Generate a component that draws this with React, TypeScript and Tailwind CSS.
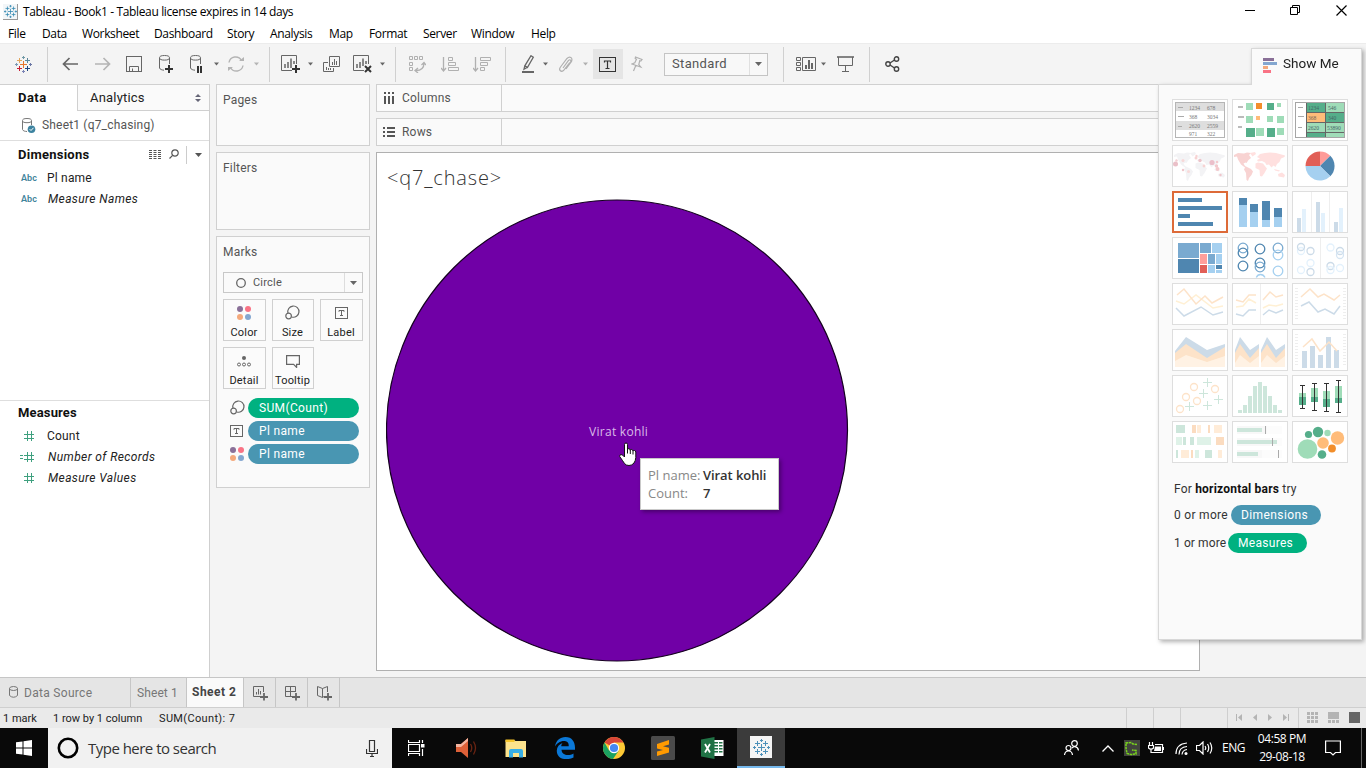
import React from "react";

type IconProps = { w: number; h: number; c?: string; sw?: number; children: React.ReactNode };

function Svg({ w, h, c = "", sw = 1, children }: IconProps) {
  return (
    <svg width={w} height={h} viewBox={`0 0 ${w} ${h}`} fill="none" stroke="currentColor" strokeWidth={sw} className={`shrink-0 ${c}`}>
      {children}
    </svg>
  );
}

function Plus({ x, y, r, color, sw = 1 }: { x: number; y: number; r: number; color: string; sw?: number }) {
  return <path d={`M${x - r} ${y}H${x + r}M${x} ${y - r}V${y + r}`} stroke={color} strokeWidth={sw} />;
}

function TableauLogo({ c = "", mono = "" }: { c?: string; mono?: string }) {
  const k = (v: string) => mono || v;
  return (
    <Svg w={17} h={17} c={c}>
      <Plus x={8.5} y={8.5} r={3.5} color={k("#e8762d")} />
      <Plus x={4.5} y={4.5} r={2.5} color={k("#e3a55a")} />
      <Plus x={12.5} y={4.5} r={2.5} color={k("#5b879b")} />
      <Plus x={4.5} y={12.5} r={2.5} color={k("#c72035")} />
      <Plus x={12.5} y={12.5} r={2.5} color={k("#1f457e")} />
      <Plus x={8.5} y={1.5} r={1.5} color={k("#7099a6")} />
      <Plus x={8.5} y={15.5} r={1.5} color={k("#7b83b5")} />
      <Plus x={1.5} y={8.5} r={1.5} color={k("#7b98b5")} />
      <Plus x={15.5} y={8.5} r={1.5} color={k("#6b77a5")} />
    </Svg>
  );
}

function Caret({ c = "" }: { c?: string }) {
  return (
    <Svg w={5} h={4} c={c}>
      <path d="M0 0.5H5L2.5 3.5Z" fill="currentColor" stroke="none" />
    </Svg>
  );
}

function BigCaret({ c = "" }: { c?: string }) {
  return (
    <Svg w={7} h={4} c={c}>
      <path d="M0 0H7L3.5 4Z" fill="currentColor" stroke="none" />
    </Svg>
  );
}

function Divider({ c = "" }: { c?: string }) {
  return <div className={`h-[35px] w-px shrink-0 bg-[#d0d0d0] ${c}`} />;
}

function FourDots({ c = "" }: { c?: string }) {
  return (
    <Svg w={14} h={14} c={c}>
      <g stroke="none">
        <circle cx="3" cy="3" r="3" fill="#8a7098" />
        <circle cx="11" cy="3" r="3" fill="#f97385" />
        <circle cx="3" cy="11" r="3" fill="#f4a97c" />
        <circle cx="11" cy="11" r="3" fill="#84a7d0" />
      </g>
    </Svg>
  );
}

function SizeIcon({ c = "" }: { c?: string }) {
  return (
    <Svg w={15} h={15} c={c} sw={1.2}>
      <path d="M3 8.2A5.6 5.6 0 1 1 6.8 12" />
      <circle cx="3.6" cy="11" r="2.8" />
    </Svg>
  );
}

function LabelIcon({ c = "" }: { c?: string }) {
  return (
    <Svg w={13} h={12} c={c}>
      <rect x="0.5" y="0.5" width="12" height="11" />
      <path d="M4 4.8V3.5H9V4.8M6.5 3.5V8.5M5 8.5H8" />
    </Svg>
  );
}

function Toolbar() {
  return (
    <div className="flex h-[41px] items-center border-t border-[#ececec] bg-[#f4f4f4] text-[#666]">
      <TableauLogo c="ml-[15px]" />
      <Divider c="ml-[15px]" />
      <Svg w={17} h={14} c="ml-[14px]" sw={1.7}>
        <path d="M16 7H1.5M7.5 1L1.5 7L7.5 13" />
      </Svg>
      <Svg w={17} h={14} c="ml-[15px] text-[#b4b4b4]" sw={1.7}>
        <path d="M1 7H15.500M9.500 1L15.500 7L9.500 13" />
      </Svg>
      <Svg w={16} h={16} c="ml-[15px]">
        <rect x="0.500" y="0.500" width="15" height="15" />
        <path d="M3.500 15V10.500H12.500V15M6.500 15.500V12.500" />
      </Svg>
      <Svg w={15} h={18} c="ml-[17px]">
        <ellipse cx="5.500" cy="2.800" rx="5" ry="2.300" />
        <path d="M0.500 3V13C1 14.500 3 15 5 15.200M10.500 3V9" />
        <path d="M10 10V18M6 14H14" stroke="#333" strokeWidth="2" />
      </Svg>
      <Svg w={14} h={18} c="ml-[16px]">
        <ellipse cx="5.500" cy="2.800" rx="5" ry="2.300" />
        <path d="M0.500 3V13C1 14.500 3 15 5 15.200M10.500 3V9" />
        <path d="M8 11V18M11 11V18" stroke="#333" strokeWidth="2" />
      </Svg>
      <Caret c="ml-[10px]" />
      <Svg w={18} h={16} c="ml-[8px] text-[#b4b4b4]" sw={1.400}>
        <path d="M2 6.500A6.700 6.700 0 0 1 14.500 4.500M16 9.500A6.700 6.700 0 0 1 3.500 11.500" />
        <path d="M12 5H17V1ZM6 11H1V15Z" fill="currentColor" stroke="none" />
      </Svg>
      <Caret c="ml-[9px] text-[#b4b4b4]" />
      <Divider c="ml-[10px]" />
      <Svg w={19} h={18} c="ml-[11px]">
        <path d="M11 15.500H0.500V0.500H15.500V9" />
        <path d="M4 13V9M7 13V7M10 13V3.500M13 9V6" strokeWidth="1.500" />
        <path d="M15 10V18M11 14H19" stroke="#333" strokeWidth="2" />
      </Svg>
      <Caret c="ml-[8px]" />
      <Svg w={17} h={17} c="ml-[10px]">
        <path d="M6.500 0.500H16.500V10.500H6.500ZM5 6.500H0.500V15.500H10.500V12M9.500 9V6M11.500 9V3M13.500 9V5M3.500 14V11M5.500 14V12M7.500 14V12" />
      </Svg>
      <Svg w={19} h={18} c="ml-[13px]">
        <path d="M11 15.500H0.500V0.500H15.500V9" />
        <path d="M4 13V9M7 13V7M10 11V3.500M13 9V6" strokeWidth="1.500" />
        <path d="M12 11L18 17M18 11L12 17" stroke="#333" strokeWidth="2" />
      </Svg>
      <Caret c="ml-[8px]" />
      <Divider c="ml-[10px]" />
      <Svg w={17} h={17} c="ml-[13px] text-[#b0b0b0]">
        <path d="M0.500 0.500H3.500V3.500H0.500ZM5.500 0.500H8.500V3.500H5.500ZM10.500 0.500H13.500V3.500H10.500ZM0.500 6.500H3.500V9.500H0.500ZM0.500 11.500H3.500V14.500H0.500Z" />
        <path d="M15 7Q15 14.500 7 14.500M12.500 9L15 6.500L17 9M9 12L6 14.500L9 17" strokeWidth="1.300" />
      </Svg>
      <Svg w={18} h={15} c="ml-[15px] text-[#b0b0b0]">
        <path d="M2.500 0V14M0 11L2.500 14L5 11" strokeWidth="1.300" />
        <path d="M7.500 0.500H11.500V3.500H7.500ZM7.500 5.500H14.500V8.500H7.500ZM7.500 10.500H17.500V13.500H7.500Z" />
      </Svg>
      <Svg w={18} h={15} c="ml-[14px] text-[#b0b0b0]">
        <path d="M2.500 0V14M0 11L2.500 14L5 11" strokeWidth="1.300" />
        <path d="M7.500 0.500H17.500V3.500H7.500ZM7.500 5.500H14.500V8.500H7.500ZM7.500 10.500H11.500V13.500H7.500Z" />
      </Svg>
      <Divider c="ml-[14px]" />
      <Svg w={13} h={18} c="ml-[16px]">
        <path d="M9 0.700L11.300 2.300L5.500 12.300L2.800 10.800ZM2.800 10.800L2 14.300L5.500 12.300" strokeWidth="1.300" />
        <path d="M0 17H12" strokeWidth="2" />
      </Svg>
      <Caret c="ml-[8px]" />
      <Svg w={14} h={17} c="ml-[11px] text-[#b0b0b0]" sw={1.200}>
        <path d="M4 12L9.500 4.500Q11 3 11.700 4.500T10.500 7L4.500 14.500Q2.500 16 1.200 14.500T1.500 11L8 2.500Q10 0.500 11.800 1.500T12.500 5.500L7 13" />
      </Svg>
      <Caret c="ml-[10px] text-[#b0b0b0]" />
      <div className="ml-[5px] flex h-[30px] w-[30px] items-center justify-start bg-[#e5e5e5] pl-[6px] text-[#333]">
        <Svg w={17} h={15}>
          <rect x="0.500" y="0.500" width="16" height="14" />
          <path d="M5.500 5.500V4H11.500V5.500M8.500 4V11.500M6.500 11.500H10.500" strokeWidth="1.200" />
        </Svg>
      </div>
      <Svg w={12} h={16} c="ml-[8px] mr-px text-[#b0b0b0]" sw={1.200}>
        <path d="M4.500 1L11 3.500L9.800 5L8.700 4.700L7.800 8.500L9.800 11L0.800 8L3.800 6.800L5.500 3.300L4.200 2.500ZM4.800 9.500L2.500 15" />
      </Svg>
      <div className="ml-[20px] flex h-[23px] w-[104px] items-center border border-[#c4c4c4] bg-[#f8f8f8]">
        <span className="w-[84px] pl-[7px] text-[13px] tracking-[0.350px] text-[#555]">Standard</span>
        <div className="flex h-full flex-1 items-center justify-center border-l border-[#e0e0e0]">
          <BigCaret />
        </div>
      </div>
      <Divider c="ml-[15px]" />
      <Svg w={20} h={15} c="ml-[12px]">
        <path d="M0.500 0.500H4.500V3.500H0.500ZM0.500 5.500H4.500V8.500H0.500ZM0.500 10.500H4.500V13.500H0.500ZM6.500 0.500H19.500V13.500H6.500Z" />
        <path d="M10 12V8M13 12V3M16 12V6" strokeWidth="2" />
      </Svg>
      <Caret c="ml-[5px]" />
      <Svg w={17} h={16} c="ml-[11px]">
        <path d="M0 1H17" strokeWidth="1.600" />
        <path d="M1.500 1V9.500H15.500V1M8.500 9.500V15M5 15.500H12" />
      </Svg>
      <Divider c="ml-[15px]" />
      <Svg w={15} h={16} c="ml-[15px] text-[#444]" sw={1.400}>
        <circle cx="3" cy="8" r="2.200" />
        <circle cx="11.500" cy="3" r="2.200" />
        <circle cx="11.500" cy="13" r="2.200" />
        <path d="M5 7L9.500 4M5 9L9.500 12" />
      </Svg>
    </div>
  );
}

function Field({ kind, name, italic }: { kind: "abc" | "num" | "calc"; name: string; italic?: boolean }) {
  return (
    <div className="flex h-[21px] items-center">
      {kind === "abc" ? (
        <span className="w-[26px] pt-[2px] text-[9px] font-semibold tracking-[0.100px] text-[#3f849b]">Abc</span>
      ) : (
        <Svg w={15} h={10} c="-ml-[1px] mr-[12px] text-[#3fa07f]">
          <path d="M4 3.500H14M4 7.500H14M7.500 0V10M11.500 0V10" />
          {kind === "calc" && <path d="M0 3.500H3M0 6.500H3" />}
        </Svg>
      )}
      <span className={`text-[12px] text-[#222] ${italic ? "pl-px tracking-[0.400px] italic" : "tracking-[0.200px]"}`}>{name}</span>
    </div>
  );
}

function DataPane() {
  return (
    <div className="flex w-[210px] shrink-0 flex-col border-r border-[#cfcfcf] bg-white">
      <div className="flex h-[27px] border-t border-[#d0d0d0] text-[13px]">
        <div className="w-[77px] pl-[18px] leading-[26px] font-bold tracking-[0.450px] text-[#111]">Data</div>
        <div className="flex flex-1 items-center justify-between border-b border-l border-[#d0d0d0] bg-[#fafafa] pr-[8px] pl-[12px] text-[#222]">
          <span className="tracking-[0.200px]">Analytics</span>
          <Svg w={6} h={8} c="text-[#667]">
            <path d="M0 3H6L3 0ZM0 5H6L3 8Z" fill="currentColor" stroke="none" />
          </Svg>
        </div>
      </div>
      <div className="flex h-[30px] items-center border-b border-[#dedede] pb-px pl-[22px] text-[12px] text-[#555]">
        <Svg w={14} h={15} c="mt-px text-[#777]">
          <ellipse cx="5" cy="2.600" rx="4.500" ry="2.100" />
          <path d="M0.500 3V11.500C1 13 3 13.400 5 13.500M9.500 3V7" />
          <circle cx="9.500" cy="11.200" r="3.800" fill="#3d83a0" stroke="none" />
          <path d="M7.700 11.200L9 12.500L11.500 9.800" stroke="#fff" />
        </Svg>
        <span className="ml-[6px] tracking-[0.180px]">Sheet1 (q7_chasing)</span>
      </div>
      <div className="flex h-[260px] flex-col border-b border-[#dedede]">
        <div className="flex h-[26px] items-center pt-px pl-[18px] text-[#555]">
          <span className="w-[131px] text-[13px] font-bold tracking-[0.250px] text-[#111]">Dimensions</span>
          <Svg w={12} h={9} c="-mt-px">
            <path d="M0 .5H12M0 2.500H12M0 4.500H12M0 6.500H12M0 8.500H12" strokeDasharray="3 1.500 3 1.500 3" />
          </Svg>
          <Svg w={10} h={10} c="-mt-px ml-[8px]" sw={1.200}>
            <circle cx="6" cy="4" r="3.200" />
            <path d="M3.600 6.400L0.500 9.500" />
          </Svg>
          <div className="ml-[7px] h-[18px] w-px bg-[#ccc]" />
          <BigCaret c="ml-[8px]" />
        </div>
        <div className="pl-[21px]">
          <Field kind="abc" name="Pl name" />
          <Field kind="abc" name="Measure Names" italic />
        </div>
      </div>
      <div className="flex h-[24px] items-center pl-[18px] text-[13px] font-bold tracking-[0.150px] text-[#111]">Measures</div>
      <div className="pl-[21px]">
        <Field kind="num" name="Count" />
        <Field kind="calc" name="Number of Records" italic />
        <Field kind="num" name="Measure Values" italic />
      </div>
    </div>
  );
}

function MarkButton({ label, children }: { label: string; children: React.ReactNode }) {
  return (
    <div className="flex h-[42px] flex-col items-center border border-[#d0d0d0] bg-[#fbfbfb] pr-px text-[#666]">
      <div className="flex h-[25px] items-center">{children}</div>
      <span className="pt-px text-[11px] leading-[14px] tracking-[0.200px] whitespace-nowrap text-[#222]">{label}</span>
    </div>
  );
}

function Pill({ label, color, children }: { label: string; color: string; children: React.ReactNode }) {
  return (
    <div className="flex h-[23px] items-center text-[#666]">
      <div className="flex w-[18px] justify-start">{children}</div>
      <div className={`h-[20px] w-[111px] rounded-full pl-[11px] text-[12px] leading-[20px] tracking-[0.350px] text-white ${color}`}>{label}</div>
    </div>
  );
}

function Cards() {
  const card = "border border-[#d0d0d0] bg-[#fafafa] px-[6px] text-[12px] tracking-[0.200px] text-[#555]";
  return (
    <div className="ml-[6px] flex w-[154px] shrink-0 flex-col gap-[6px]">
      <div className={`h-[62px] pt-[6px] ${card}`}>Pages</div>
      <div className={`h-[78px] pt-[6px] ${card}`}>Filters</div>
      <div className={`h-[252px] pt-[6px] ${card}`}>
        <div>Marks</div>
        <div className="mt-[11px] flex h-[21px] w-[140px] items-center border border-[#c8c8c8] bg-[#fafafa] text-[#666]">
          <Svg w={10} h={10} c="ml-[12px]" sw={1.300}>
            <circle cx="5" cy="5" r="4.300" />
          </Svg>
          <span className="ml-[7px] flex-1 pt-px text-[11px] text-[#555]">Circle</span>
          <div className="flex h-full w-[18px] items-center justify-center border-l border-[#ddd]">
            <BigCaret />
          </div>
        </div>
        <div className="mt-[6px] grid w-[140px] grid-cols-[43px_42px_43px] gap-x-[6px] gap-y-[6px]">
          <MarkButton label="Color"><FourDots /></MarkButton>
          <MarkButton label="Size"><SizeIcon /></MarkButton>
          <MarkButton label="Label"><LabelIcon /></MarkButton>
          <MarkButton label="Detail">
            <Svg w={14} h={11} c="mt-[2px]">
              <circle cx="7" cy="2" r="2" fill="currentColor" stroke="none" />
              <circle cx="2" cy="8.500" r="1.500" />
              <circle cx="7" cy="8.500" r="1.500" />
              <circle cx="12" cy="8.500" r="1.500" />
            </Svg>
          </MarkButton>
          <MarkButton label="Tooltip">
            <Svg w={14} h={13} c="mt-px" sw={1.200}>
              <path d="M0.600 0.600H13.400V9.400H10.600V12.400L7.600 9.400H0.600Z" />
            </Svg>
          </MarkButton>
        </div>
        <div className="mt-[7px] pl-[7px]">
          <Pill label="SUM(Count)" color="bg-[#00b180]"><SizeIcon /></Pill>
          <Pill label="Pl name" color="bg-[#4996b2]"><LabelIcon /></Pill>
          <Pill label="Pl name" color="bg-[#4996b2]"><FourDots /></Pill>
        </div>
      </div>
    </div>
  );
}

function Shelf({ label, children }: { label: string; children: React.ReactNode }) {
  return (
    <div className="flex h-[28px] border border-[#d0d0d0] bg-[#fafafa] text-[12px] text-[#555]">
      <div className="flex w-[125px] items-center border-r border-[#d0d0d0] pl-[6px]">
        {children}
        <span className="ml-[7px] tracking-[0.200px]">{label}</span>
      </div>
    </div>
  );
}

function Worksheet() {
  return (
    <div className="ml-[6px] flex w-[824px] shrink-0 flex-col gap-[6px]">
      <Shelf label="Columns">
        <Svg w={12} h={12}>
          <path d="M2 0V2M6 0V2M10 0V2M2 4V12M6 4V12M10 4V12" strokeWidth="2" />
        </Svg>
      </Shelf>
      <Shelf label="Rows">
        <Svg w={12} h={10}>
          <path d="M0 1H2M0 5H2M0 9H2M4 1H12M4 5H12M4 9H12" strokeWidth="2" />
        </Svg>
      </Shelf>
      <div className="relative h-[519px] border border-[#b0b0b0] bg-white">
        <div className="pt-[10px] pl-[10px] font-['Open_Sans',sans-serif] text-[20px] leading-[30px] font-light tracking-[0.850px] text-[#333]">&lt;q7_chase&gt;</div>
        <svg className="absolute top-[46px] left-[9px]" width="463" height="463" viewBox="0 0 463 463">
          <circle cx="231" cy="231.500" r="230.500" fill="#7000a6" stroke="#14001e" strokeWidth="1.200" />
        </svg>
        <div className="absolute top-[270px] left-[212px] font-['Open_Sans',sans-serif] text-[12px] tracking-[0.280px] text-[#d9bbe8]">Virat kohli</div>
        <svg className="absolute top-[289px] left-[241px]" width="19" height="25" viewBox="0 0 19 25">
          <path
            d="M6.500 2.500Q6.500 1 8 1T9.500 2.500V7.500Q10 6.500 11 6.700T12.200 8.200Q12.600 7.300 13.700 7.500T15 9Q15.500 8.300 16.500 8.500T17.800 10V15.500Q17.500 19 16 21Q14 23.500 11 23.500Q8 23.500 6.500 21.500Q4.500 18.500 1.700 14.500Q1.500 12.800 3 12.500Q4.500 12.500 6.500 15Z"
            fill="#fff" stroke="#111" strokeWidth="1"
          />
          <path d="M9.500 7V11.500M12.300 8V12M15 9V12.500" stroke="#111" fill="none" />
        </svg>
        <div className="absolute top-[305px] left-[263px] grid h-[52px] w-[139px] grid-cols-[55px_1fr] content-center border border-[#c9c9c9] bg-white pl-[7px] font-['Open_Sans',sans-serif] text-[13px] leading-[18px] whitespace-nowrap shadow-[2px_2px_4px_rgba(0,0,0,0.350)]">
          <span className="text-[#888]">Pl name:</span>
          <span className="font-semibold tracking-[-0.080px] text-[#333]">Virat kohli</span>
          <span className="text-[#888]">Count:</span>
          <span className="font-semibold text-[#333]">7</span>
        </div>
      </div>
    </div>
  );
}

const D = "#4f86b0";
const L = "#a5d0f0";
const G = "#55ae8a";
const g = "#9fdcb8";
const O = "#f28e2b";
const o = "#ffbc79";

type R = [number, number, number, number, string];
function Rects({ items }: { items: R[] }) {
  return (
    <g shapeRendering="crispEdges" stroke="none">
      {items.map(([x, y, w, h, f], i) => (
        <rect key={i} x={x} y={y} width={w} height={h} fill={f} />
      ))}
    </g>
  );
}
type C = [number, number, number, string];
function Dots({ items, ring }: { items: C[]; ring?: boolean }) {
  return (
    <g>
      {items.map(([x, y, r, f], i) => (
        <circle key={i} cx={x} cy={y} r={r} fill={ring ? "none" : f} stroke={ring ? f : "none"} strokeWidth="1.300" />
      ))}
    </g>
  );
}
function Line({ d, c }: { d: string; c: string }) {
  return <path d={d} stroke={c} strokeWidth="1.500" fill="none" />;
}
function Num({ x, y, t, c = "#777" }: { x: number; y: number; t: string; c?: string }) {
  return <text x={x} y={y} fontSize="5.500" fill={c} fontFamily="Liberation Serif, serif">{t}</text>;
}

function World({ fill, americas }: { fill: string; americas: string }) {
  return (
    <g>
      <path
        fill={americas}
        d="M2 10L6 8L12 8.500L15 7.500L19 8L17 10L19 13L16.500 15L14.500 18L13.500 17.500L11.500 18.500L13 21L15 22L19 24L21 26.500L19.500 30L17 33L16 36L14.500 35L14 28L12 24.500L13 22.500L9 19.500L6 14.500L5 11.500L2 12Z"
      />
      <path
        fill={fill}
        d="M18 8L23 7L24 9L20.500 11.500ZM25 12L28 9L33 8L38 7.500L44 8L53 10.500L52.500 12L49 13.500L47.500 17L45 19L43.500 22L41.500 20.500L39.500 22.500L37 19.500L34.500 20L33 17.500L30 16L26 16.500L25 15L28 13.500ZM23.500 18.500L26 17.500L31 18.500L34 22.500L35 23.500L32.500 28L30 31.500L28 31L27.500 25L23.500 23ZM42 24L48 25.500L47 26.500L43 25.500ZM46 29L50 27.500L53 30L52 32.500L46.500 31.500Z"
      />
    </g>
  );
}

const thumbs: React.ReactNode[] = [
  <g key="text">
    <rect x="3.500" y="3.500" width="49" height="35" fill="#fff" stroke="#b5b5b5" />
    <Rects items={[[4, 4, 48, 8, "#dedede"], [4, 22, 48, 9, "#dedede"], [6, 8, 5, 1, "#aaa"], [6, 17, 6, 1, "#aaa"], [6, 27, 4, 1, "#aaa"]]} />
    <Num x={17} y={11} t="1234" /><Num x={35} y={11} t="678" />
    <Num x={17} y={20} t="368" /><Num x={35} y={20} t="3034" />
    <Num x={17} y={29} t="2620" /><Num x={35} y={29} t="2559" />
    <Num x={17} y={37} t="971" /><Num x={35} y={37} t="322" />
  </g>,
  <Rects key="heat" items={[[6, 7, 5, 2, "#bbb"], [6, 17, 6, 2, "#bbb"], [6, 27, 4, 2, "#bbb"], [14, 4, 7, 7, g], [24, 4, 6, 6, O], [35, 4, 7, 7, G], [45, 4, 4, 4, g], [14, 17, 7, 7, g], [24, 17, 4, 4, o], [35, 17, 6, 6, g], [45, 17, 7, 7, g], [14, 29, 9, 9, G], [24, 29, 8, 8, g], [35, 29, 8, 9, G], [45, 29, 7, 7, g]]} />,
  <g key="hl">
    <rect x="3.500" y="3.500" width="49" height="35" fill="#fff" stroke="#a5a5a5" />
    <Rects items={[[6, 8, 5, 1, "#aaa"], [6, 17, 6, 1, "#aaa"], [6, 28, 4, 1, "#aaa"], [14, 4, 38, 34, "#666"], [15, 4, 18, 9, G], [34, 4, 18, 9, g], [15, 14, 18, 9, o], [34, 14, 18, 9, G], [15, 24, 18, 9, g], [34, 24, 18, 9, g], [15, 34, 18, 4, G], [34, 34, 18, 4, g]]} />
    <Num x={16} y={10.500} t="1234" c="#466" /><Num x={36} y={10.500} t="546" c="#466" />
    <Num x={16} y={21} t="368" c="#765" /><Num x={36} y={21} t="340" c="#466" />
    <Num x={16} y={31} t="2620" c="#466" /><Num x={35} y={31} t="53890" c="#466" />
  </g>,
  <g key="map1">
    <World fill="#f3f3f5" americas="#f3f3f5" />
    <Dots items={[[3.500, 19, 2.500, "#eac0c8"], [4.500, 15.500, 1.200, "#f1cfd2"], [11, 15.500, 1.500, "#f8d8d8"], [11, 25, 1.200, "#efc5ca"], [16.500, 26.500, 1.500, "#f9dada"], [24, 13, 1.500, "#f7d3d3"], [28, 15.500, 1.700, "#edc3c9"], [24.500, 11, 1.200, "#f7d3d3"], [32, 21, 1.400, "#f7d3d3"], [40, 17.500, 2.600, "#ebbfca"], [44.500, 21, 1.700, "#f3c8cc"], [45.500, 24, 2, "#f3c8cc"], [45, 17, 1.200, "#f3c8cc"], [48.500, 30, 1.200, "#efc5ca"]]} />
  </g>,
  <World key="map2" fill="#ffe0df" americas="#f8d3d2" />,
  <g key="pie" stroke="none">
    <path d="M28 21L28 6.500A14.500 14.500 0 0 1 38.300 10.800Z" fill="#ff9b98" />
    <path d="M28 21L38.300 10.800A14.500 14.500 0 0 1 38.300 31.300Z" fill={D} />
    <path d="M28 21L38.300 31.300A14.500 14.500 0 0 1 13.500 21Z" fill={L} />
    <path d="M28 21H13.500A14.500 14.500 0 0 1 28 6.500Z" fill="#e15f57" />
  </g>,
  <Rects key="bars" items={[[6, 7, 24, 4, D], [6, 15, 44, 4, D], [6, 23, 12, 4, D], [6, 31, 35, 4, D]]} />,
  <Rects key="stack" items={[[7, 7, 8, 7, D], [7, 14, 8, 22, L], [18, 13, 8, 8, D], [18, 21, 8, 15, L], [30, 10, 8, 19, D], [30, 29, 8, 7, L], [42, 17, 8, 9, D], [42, 26, 8, 10, L]]} />,
  <Rects key="side" items={[[19, 1, 1, 40, "#eee"], [37, 1, 1, 40, "#eee"], [5, 27, 4, 14, "#ccdbe8"], [10, 18, 4, 23, "#e3f1fc"], [24, 11, 4, 30, "#ccdbe8"], [29, 22, 4, 19, "#e3f1fc"], [42, 31, 4, 10, "#ccdbe8"], [47, 17, 4, 24, "#e3f1fc"]]} />,
  <Rects key="tree" items={[[6, 6, 21, 15, "#7aaad0"], [6, 22, 21, 14, D], [28, 6, 11, 10, "#7aaad0"], [40, 6, 10, 10, L], [28, 17, 7, 10, "#ff9f9b"], [36, 17, 7, 10, "#7aaad0"], [44, 17, 6, 10, L], [28, 28, 7, 8, "#e15f57"], [36, 28, 7, 8, L], [44, 28, 6, 4, D], [44, 33, 6, 3, L]]} />,
  <g key="circ">
    <Dots ring items={[[11, 11, 4.800, "#7aaad0"], [11, 16, 4.800, D], [11, 29, 4.800, D], [28, 12, 4.800, D], [28, 26, 4.800, D], [28, 30, 4.800, "#7aaad0"], [46, 11, 4.800, "#7aaad0"], [46, 18, 4.800, L], [46, 34, 4.800, L]]} />
    <path d="M24.300 40.500Q25.500 37.500 28.500 37.500T33 40.500" stroke={L} strokeWidth="1.300" fill="none" />
  </g>,
  <g key="sidecirc">
    <Rects items={[[28, 1, 1, 40, "#eee"]]} />
    <Dots ring items={[[9, 14, 3.500, "#e3f1fc"], [9, 10, 3.500, "#ccdbe8"], [18.500, 14, 3.500, "#ccdbe8"], [18.500, 26, 3.500, "#e3f1fc"], [9, 33, 3.500, "#e3f1fc"], [18.500, 35, 3.500, "#ccdbe8"], [38.500, 10.500, 3.500, "#e3f1fc"], [48, 14, 3.500, "#ccdbe8"], [48, 18, 3.500, "#d5e5f3"], [38.500, 29, 3.500, "#ccdbe8"], [38.500, 33, 3.500, "#e3f1fc"], [48, 31, 3.500, "#e3f1fc"]]} />
  </g>,
  <g key="lines">
    <Line d="M4 18L12 21L24 12L41 25L51 23" c="#fff0d4" />
    <Line d="M5 12L12 6L24 21L33 13L40 20L51 14" c="#fde3c9" />
    <Line d="M4 25L12 33L29 24L41 32L51 29" c="#ccdbe8" />
  </g>,
  <g key="lines2">
    <Rects items={[[28, 1, 1, 40, "#eee"]]} />
    <Line d="M4 24L11 23L17 16L24 20M31 25L37 22L44 23L51 21" c="#fff0d4" />
    <Line d="M4 17L11 19L17 12L24 12M31 17L38 9L44 14L51 12" c="#fde3c9" />
    <Line d="M4 31L11 33L17 27L24 27M31 32L37 27L44 30L51 27" c="#ccdbe8" />
  </g>,
  <g key="dual">
    <path d="M4.500 5V38M52.500 5V38" stroke="#eeeeee" strokeWidth="3" strokeDasharray="1 2" />
    <Line d="M9 14L18 6L26 14L32 11L42 17L48 12" c="#fde3c9" />
    <Line d="M9 23L17 19L26 29L33 26L42 31L48 23" c="#ccdbe8" />
  </g>,
  <g key="area">
    <path d="M3 22L14 8L35 21L53 15V38H3Z" fill="#ccdbe8" />
    <path d="M3 24L14 15L35 29L53 18V38H3Z" fill="#fde3c9" />
    <path d="M3 32L14 26L35 33L53 27V38H3Z" fill="#fff2e4" />
  </g>,
  <g key="area2">
    <path d="M3 21L8 8L18 21L27 15V38H3ZM29 21L35 8L44 21L53 15V38H29Z" fill="#ccdbe8" />
    <path d="M3 24L8 15L18 29L27 19V38H3ZM29 24L35 15L44 29L53 19V38H29Z" fill="#fde3c9" />
    <path d="M3 34L8 26L18 34L27 27V38H3ZM29 34L35 26L44 34L53 27V38H29Z" fill="#fff2e4" />
  </g>,
  <g key="combo">
    <path d="M4.500 5V38M52.500 5V38" stroke="#eeeeee" strokeWidth="3" strokeDasharray="1 2" />
    <Rects items={[[10, 22, 5, 17, "#ccdbe8"], [18, 17, 5, 22, "#ccdbe8"], [26, 26, 5, 13, "#ccdbe8"], [34, 8, 5, 31, "#ccdbe8"], [42, 21, 5, 18, "#ccdbe8"]]} />
    <Line d="M11 18L20 10L28 22L37 13L45 22" c="#fde3c9" />
  </g>,
  <g key="scatter">
    <Dots ring items={[[8, 34, 3.500, "#fde3c9"], [14, 22, 3.500, "#fde3c9"], [22, 12, 3.500, "#fde3c9"], [25, 26, 3.500, "#fde3c9"], [43, 14, 3.500, "#fde3c9"]]} />
    {[[17.500, 31.500], [31.500, 18.500], [35.500, 7.500], [35.500, 30.500], [46.500, 24.500]].map(([x, y], i) => (
      <Plus key={i} x={x} y={y} r={4.500} color="#cde6db" />
    ))}
  </g>,
  <Rects key="hist" items={[[6, 35, 4, 3, "#cde6db"], [11, 30, 4, 8, "#cde6db"], [16, 21, 4, 17, "#cde6db"], [21, 11, 4, 27, "#cde6db"], [26, 7, 4, 31, "#cde6db"], [31, 11, 4, 27, "#cde6db"], [36, 21, 4, 17, "#cde6db"], [41, 30, 4, 8, "#cde6db"], [46, 35, 4, 3, "#cde6db"]]} />,
  <g key="box">
    <Rects items={[[7, 18, 7, 5, g], [7, 22, 7, 8, G], [19, 13, 7, 9, g], [19, 22, 7, 5, G], [31, 16, 7, 8, g], [31, 24, 7, 8, G], [43, 11, 7, 12, g], [43, 23, 7, 5, G]]} />
    <path d="M10.500 10V34M8 10.500H13M8 33.500H13M22.500 8V36M20 8.500H25M20 35.500H25M34.500 8V37M32 8.500H37M32 36.500H37M46.500 5V38M44 5.500H49M44 37.500H49" stroke="#333" fill="none" />
  </g>,
  <Rects key="gantt" items={[[4, 4, 9, 8, "#cde6db"], [20, 4, 4, 8, "#fbdcc0"], [25, 4, 4, 8, "#ffecd8"], [36, 4, 2, 8, "#fbdcc0"], [42, 4, 8, 8, "#ffecd8"], [4, 16, 6, 8, "#dff2e8"], [11, 16, 3, 8, "#cde6db"], [18, 16, 4, 8, "#cde6db"], [25, 16, 14, 8, "#dff2e8"], [44, 16, 8, 8, "#fbdcc0"], [4, 29, 2, 8, "#cde6db"], [9, 29, 8, 8, "#ffecd8"], [19, 29, 2, 8, "#fbdcc0"], [23, 29, 4, 8, "#dff2e8"], [33, 29, 7, 8, "#cde6db"], [46, 29, 4, 8, "#ffecd8"]]} />,
  <Rects key="bullet" items={[[5, 5, 45, 8, "#fcfcfc"], [5, 17, 45, 8, "#fcfcfc"], [5, 29, 45, 8, "#fcfcfc"], [5, 5, 30, 8, "#f8f8f8"], [5, 17, 33, 8, "#f8f8f8"], [5, 29, 25, 8, "#f8f8f8"], [5, 7, 25, 4, "#cde6db"], [5, 19, 40, 4, "#cde6db"], [5, 31, 21, 4, "#cde6db"], [33, 5, 1, 8, "#aaa"], [40, 17, 1, 8, "#aaa"], [46, 29, 1, 8, "#aaa"]]} />,
  <Dots key="bubble" items={[[15.500, 28, 9.800, g], [16.500, 13.500, 3.600, G], [26, 11, 5.200, G], [35.500, 12, 3.200, g], [31, 22, 5.800, o], [45.500, 17, 6.700, o], [40, 27.500, 3.900, O], [30, 33.500, 4.300, G]]} />,
];

function ShowMe() {
  return (
    <div className="absolute top-[48px] left-[1158px] w-[204px] drop-shadow-[2px_2px_2px_rgba(0,0,0,0.300)]">
      <div className="relative z-10 -mb-px ml-[93px] flex h-[37px] items-center border border-b-0 border-[#d8d8d8] bg-[#fafafa] pl-[11px]">
        <Svg w={14} h={15} c="mb-[4px]">
          <Rects items={[[0, 0, 11, 3, "#8a7098"], [0, 4, 14, 3, "#84a7d0"], [0, 8, 5, 3, "#f4a97c"], [0, 12, 8, 3, "#f97385"]]} />
        </Svg>
        <span className="ml-[6px] pb-[7px] text-[13.500px] tracking-[0px] text-[#222]">Show Me</span>
      </div>
      <div className="h-[556px] border border-[#d8d8d8] bg-[#fafafa] pt-[14px] pl-[13px] text-[12px] text-[#333]">
        <div className="grid grid-cols-[56px_56px_56px] gap-[4px]">
          {thumbs.map((t, i) => (
            <svg key={i} width="56" height="42" viewBox="0 0 56 42" className="block">
              <rect x={i === 6 ? 1 : 0.5} y={i === 6 ? 1 : 0.5} width={i === 6 ? 54 : 55} height={i === 6 ? 40 : 41} fill="#fff" stroke={i === 6 ? "#dd6a38" : "#dedede"} strokeWidth={i === 6 ? 2 : 1} />
              {t}
            </svg>
          ))}
        </div>
        <div className="mt-[16px] pl-[2px] leading-[20px] tracking-[0.100px]">
          <div className="tracking-[0.200px]">For <b className="text-[#111]">horizontal bars</b> try</div>
          <div className="mt-[6px] flex">
            <span className="w-[57px] tracking-[0.300px]">0 or more</span>
            <span className="h-[20px] w-[90px] rounded-full bg-[#4996b2] pl-[10px] tracking-[0.400px] text-white">Dimensions</span>
          </div>
          <div className="mt-[8px] flex">
            <span className="w-[54px]">1 or more</span>
            <span className="h-[20px] w-[79px] rounded-full bg-[#00b180] pl-[10px] tracking-[0.300px] text-white">Measures</span>
          </div>
        </div>
      </div>
    </div>
  );
}

function SheetTabs() {
  const tab = "flex items-center border-r border-[#c6c6c6]";
  return (
    <div className="flex h-[30px] border-t border-[#c6c6c6] bg-[#e5e5e5] text-[12px] text-[#777]">
      <div className={`w-[131px] pl-[9px] ${tab}`}>
        <Svg w={10} h={12} c="mb-[2px]">
          <ellipse cx="4.500" cy="2.500" rx="4" ry="2" />
          <path d="M.5 2.500V9.500Q4.500 13 8.500 9.500V2.500" />
        </Svg>
        <span className="ml-[5px] pt-px tracking-[0.300px]">Data Source</span>
      </div>
      <div className={`w-[56px] pt-px pl-[6px] tracking-[0.100px] ${tab}`}>Sheet 1</div>
      <div className={`w-[57px] bg-[#fafafa] pb-[2px] pl-[5px] font-bold tracking-[0.500px] text-[#444] ${tab}`}>Sheet 2</div>
      <div className={`w-[32px] justify-center pt-[2px] pl-px text-[#666] ${tab}`}>
        <Svg w={15} h={15}>
          <path d="M8 10.500H0.500V0.500H10.500V6M3.500 8.500V6M5.500 8.500V3M7.500 8.500V5" />
          <path d="M11 7V14.500M7 11H15" strokeWidth="1.800" />
        </Svg>
      </div>
      <div className={`w-[32px] justify-center pt-[2px] pl-px text-[#666] ${tab}`}>
        <Svg w={15} h={15}>
          <path d="M8 10.500H0.500V0.500H10.500V6M5.500 0V10M0 5.500H11" />
          <path d="M11 7V14.500M7 11H15" strokeWidth="1.800" />
        </Svg>
      </div>
      <div className={`w-[32px] justify-center pt-[2px] pl-px text-[#666] ${tab}`}>
        <Svg w={15} h={15}>
          <path d="M7 10.500L5.500 11.500L0.500 9.500V0.500L5.500 2.500L10.500 0.500V6M5.500 2.500V11.500" />
          <path d="M11 7V14.500M7 11H15" strokeWidth="1.800" />
        </Svg>
      </div>
    </div>
  );
}

function StatusBar() {
  return (
    <div className="flex h-[21px] border-t border-[#cfcfcf] bg-[#eaeaea] text-[11px] leading-[21px] whitespace-nowrap text-[#222]">
      <span className="w-[50px] pl-[3px]">1 mark</span>
      <span className="w-[106px] pl-[3px]">1 row by 1 column</span>
      <span className="pl-[3px] tracking-[0.350px]">SUM(Count): 7</span>
      <div className="ml-auto flex text-[#b4b4b4]">
        <div className="w-[27px] border-l border-[#cfcfcf]" />
        <div className="w-[27px] border-l border-[#cfcfcf]" />
        <div className="w-[47px] border-l border-[#cfcfcf]" />
        <div className="flex w-[71px] items-center gap-[11px] border-l border-[#cfcfcf] pb-px pl-[8px]">
          <Svg w={6} h={7}><path d="M0 0H1V7H0ZM6 0V7L2 3.500Z" fill="currentColor" stroke="none" /></Svg>
          <Svg w={4} h={7}><path d="M4 0V7L0 3.500Z" fill="currentColor" stroke="none" /></Svg>
          <Svg w={4} h={7}><path d="M0 0V7L4 3.500Z" fill="currentColor" stroke="none" /></Svg>
          <Svg w={6} h={7}><path d="M5 0H6V7H5ZM0 0V7L4 3.500Z" fill="currentColor" stroke="none" /></Svg>
        </div>
        <div className="flex w-[68px] items-center gap-[10px] border-l border-[#cfcfcf] pb-px pl-[8px]">
          <Svg w={11} h={11}><path d="M1.500 0V11M5.500 0V11M9.500 0V11" strokeWidth="3" strokeDasharray="3 1" /></Svg>
          <Svg w={11} h={11}><path d="M0 0H11V7H0ZM0 8H3V11H0ZM4 8H7V11H4ZM8 8H11V11H8Z" fill="currentColor" stroke="none" /></Svg>
          <div className="h-[11px] w-[11px] bg-[#666]" />
        </div>
      </div>
    </div>
  );
}

function TaskIcon({ children, active }: { children: React.ReactNode; active?: boolean }) {
  return (
    <div className={`flex w-[48px] items-center justify-center ${active ? "border-b-2 border-[#76b9ed] bg-[#3b3b3b]" : ""}`}>{children}</div>
  );
}

function Taskbar() {
  return (
    <div className="flex h-[40px] bg-[#090909] font-['Open_Sans',sans-serif] text-white">
      <div className="flex w-[48px] items-center justify-center">
        <Svg w={16} h={16}>
          <path d="M0 2.300L6.500 1.400V7.500H0ZM7.500 1.200L16 0V7.500H7.500ZM0 8.500H6.500V14.600L0 13.700ZM7.500 8.500H16V16L7.500 14.800Z" fill="#fff" stroke="none" />
        </Svg>
      </div>
      <div className="flex w-[344px] items-center bg-[#f1f1f1] text-[#333]">
        <Svg w={22} h={22} c="ml-[9px] text-black" sw={2.600}>
          <circle cx="11" cy="11" r="9.200" />
        </Svg>
        <span className="ml-[9px] flex-1 text-[15px] tracking-[-0.520px] whitespace-nowrap">Type here to search</span>
        <Svg w={12} h={17} c="mr-[14px]" sw={1.200}>
          <path d="M3.500 0.500H8.500V11.500H3.500ZM0.500 9V13.500H11.500V9M6 13.500V16.500M4 16.500H8" />
        </Svg>
      </div>
      <TaskIcon>
        <Svg w={17} h={16} sw={1.200}>
          <path d="M.5 0V2.500H11.500V0M.5 4.500H11.500V11.500H.5ZM.5 16V13.500H11.500V16M14.500 0V3M14.500 9V16" />
          <path d="M13 4H16.500V7.500H13Z" fill="#fff" stroke="none" />
        </Svg>
      </TaskIcon>
      <div className="ml-[3px] flex gap-px">
        <TaskIcon>
          <Svg w={22} h={22}>
            <path d="M0 7H5L12 1V21L5 15H0Z" fill="#dc6038" stroke="none" />
            <path d="M0 7H5L12 1V4L5 10H0Z" fill="#f3b5a0" stroke="none" />
            <path d="M14.500 7Q17 11 14.500 15M17.500 4.500Q21.500 11 17.500 17.500" stroke="#6b2412" strokeWidth="1.300" />
          </Svg>
        </TaskIcon>
        <TaskIcon>
          <Svg w={22} h={19}>
            <g stroke="none">
              <path d="M.5 1H9L10.500 2H21V18H.5Z" fill="#fce38d" />
              <path d="M.5 0.500H9.500V3H.5Z" fill="#f6c52b" />
              <path d="M4 12Q4 10 6 10H16Q18 10 18 12V18.500H14V14H8V18.500H4Z" fill="#37aee6" />
            </g>
          </Svg>
        </TaskIcon>
        <TaskIcon>
          <Svg w={20} h={22}>
            <path
              d="M0 9.500C1 3.500 5 0 10.500 0C17 0 20 5 20 10.500V12.800H6.500C6.800 19 14.500 19 18.500 16.500V20.500C10 24.500 1.500 21 1.800 13.500C1.900 9.800 4.300 7.300 7.500 6C6.500 7.200 6.300 8.500 6.300 9.200H13.700C14 5 11.500 4 9 4C5 4 1.500 6.500 0 9.500Z"
              fill="#0b78d7" stroke="none"
            />
          </Svg>
        </TaskIcon>
        <TaskIcon>
          <Svg w={22} h={22}>
            <g stroke="none">
              <circle cx="11" cy="11" r="11" fill="#fdc935" />
              <path d="M11 11L1.500 5.500A11 11 0 0 1 20.500 5.500H11Z" fill="#d84638" />
              <path d="M1.500 5.500A11 11 0 0 0 10 22L15.500 14L11 11L6 13.500Z" fill="#1ba261" />
              <circle cx="11" cy="11" r="5.200" fill="#fff" />
              <circle cx="11" cy="11" r="4.100" fill="#4688f1" />
            </g>
          </Svg>
        </TaskIcon>
        <TaskIcon>
          <Svg w={24} h={24}>
            <rect width="24" height="24" rx="1.500" fill="#4a4a4a" stroke="none" />
            <path d="M18 4L6 8V12.500L12 14L6 15.500V20L18 16.500V11.800L12 10.200L18 8.500Z" fill="#ff9a00" stroke="none" />
          </Svg>
        </TaskIcon>
        <TaskIcon>
          <Svg w={23} h={22}>
            <g stroke="none">
              <path d="M12 3H22.500V19H12Z" fill="#fff" />
              <path d="M13 5H17V6.500H13ZM18 5H21.500V6.500H18ZM13 8H17V9.500H13ZM18 8H21.500V9.500H18ZM13 11H17V12.500H13ZM18 11H21.500V12.500H18ZM13 14H17V15.500H13ZM18 14H21.500V15.500H18Z" fill="#207245" />
              <path d="M0 2.500L13.500 0V22L0 19.500Z" fill="#207245" />
            </g>
            <path d="M4 7L9 15.500M9 7L4 15.500" stroke="#fff" strokeWidth="1.800" />
          </Svg>
        </TaskIcon>
        <TaskIcon active>
          <div className="flex h-[22px] w-[22px] items-center justify-center bg-[#f4f4f4]">
            <TableauLogo mono="#4b8fb8" />
          </div>
        </TaskIcon>
      </div>
      <div className="ml-auto flex items-center">
        <Svg w={15} h={16} sw={1.200}>
          <circle cx="10.500" cy="3.500" r="2.800" />
          <circle cx="4.500" cy="8" r="2.500" />
          <path d="M.5 15Q1 11 4.500 11T8.500 15M8 8Q9.500 6.500 11 6.700Q14 7.200 14.500 10.500" />
        </Svg>
        <Svg w={12} h={7} c="ml-[23px]" sw={1.300}>
          <path d="M.5 6.500L6 1L11.500 6.500" />
        </Svg>
        <Svg w={16} h={16} c="ml-[10px]">
          <rect width="16" height="16" fill="#41443d" stroke="none" />
          <path d="M13 4.500L9 4L7 2.500L2 3V8L3 13.500L7 14.500L12 14V10.500L8 10" stroke="#79d51d" strokeWidth="1.500" strokeDasharray="2.500 0.600" />
        </Svg>
        <Svg w={16} h={12} c="ml-[8px]" sw={1.200}>
          <path d="M1.500 0V3M4.500 0V3M.5 3.500H5.500V6Q3 8.500 .5 6ZM3 7.500V10.500H5M7 2.500H14.500V10.500H5M15.500 5V8" />
          <path d="M7 4.500H13V9H6Z" fill="#fff" stroke="none" />
        </Svg>
        <Svg w={13} h={13} c="ml-[11px]" sw={1.200}>
          <path d="M1 12Q1 2 12 1M4 12.500Q4 5 12 4.500M7 12.500Q7.500 8 12 7.500" />
          <circle cx="11" cy="11.500" r="1.500" fill="#fff" stroke="none" />
        </Svg>
        <Svg w={17} h={14} c="ml-[8px]" sw={1.200}>
          <path d="M.5 4.500H3.500L7 1V13L3.500 9.500H.5ZM9 5Q10.500 7 9 9M11.500 3Q14 7 11.500 11M14 1.500Q17.500 7 14 12.500" />
        </Svg>
        <span className="ml-[9px] w-[24px] text-[12px] tracking-[-0.500px]">ENG</span>
        <div className="ml-[9px] w-[54px] text-center text-[12px] leading-[18px] tracking-[-0.400px] whitespace-nowrap">
          <div>04:58 PM</div>
          <div>29-08-18</div>
        </div>
        <Svg w={16} h={16} c="ml-[16px]" sw={1.200}>
          <path d="M.6 1H15.400V12.500H10.500L8 15L5.500 12.500H.6Z" />
        </Svg>
        <div className="ml-[20px] h-[40px] w-[5px] border-l border-[#666]" />
      </div>
    </div>
  );
}

export default function App() {
  return (
    <div className="relative flex h-[768px] w-[1366px] flex-col overflow-hidden bg-[#f4f4f4] font-['Roboto','Liberation_Sans',sans-serif]">
      <div className="flex h-[23px] items-center bg-white pl-[3px] font-['Open_Sans',sans-serif] text-[12px] text-black">
        <div className="flex h-[16px] w-[15px] items-center justify-center border-r border-b border-[#999] bg-[#f3f6f8]">
          <TableauLogo mono="#2f86b0" c="h-[13px] w-[13px]" />
        </div>
        <span className="ml-[5px] pt-px tracking-[-0.360px]">Tableau - Book1 - Tableau license expires in 14 days</span>
        <div className="ml-auto flex items-center pb-[3px]">
          <Svg w={10} h={10}><path d="M0 5.500H10" /></Svg>
          <Svg w={10} h={10} c="ml-[35px]"><path d="M.5 2.500H7.500V9.500H.5ZM2.500 2.500V.5H9.500V7.500H7.500" /></Svg>
          <Svg w={11} h={11} c="mr-[19px] ml-[36px]" sw={1.200}><path d="M.5 .5L10.500 10.500M10.500 .5L.5 10.500" /></Svg>
        </div>
      </div>
      <div className="grid h-[20px] grid-cols-[34px_40px_72px_73px_43px_59px_40px_54px_48px_60px_40px] items-center bg-white pt-[2px] pl-[8px] font-['Open_Sans',sans-serif] text-[12px] tracking-[-0.350px] text-black">
        {["File", "Data", "Worksheet", "Dashboard", "Story", "Analysis", "Map", "Format", "Server", "Window", "Help"].map((m) => (
          <span key={m}>{m}</span>
        ))}
      </div>
      <Toolbar />
      <div className="flex h-[593px]">
        <DataPane />
        <Cards />
        <Worksheet />
      </div>
      <SheetTabs />
      <StatusBar />
      <Taskbar />
      <ShowMe />
    </div>
  );
}
